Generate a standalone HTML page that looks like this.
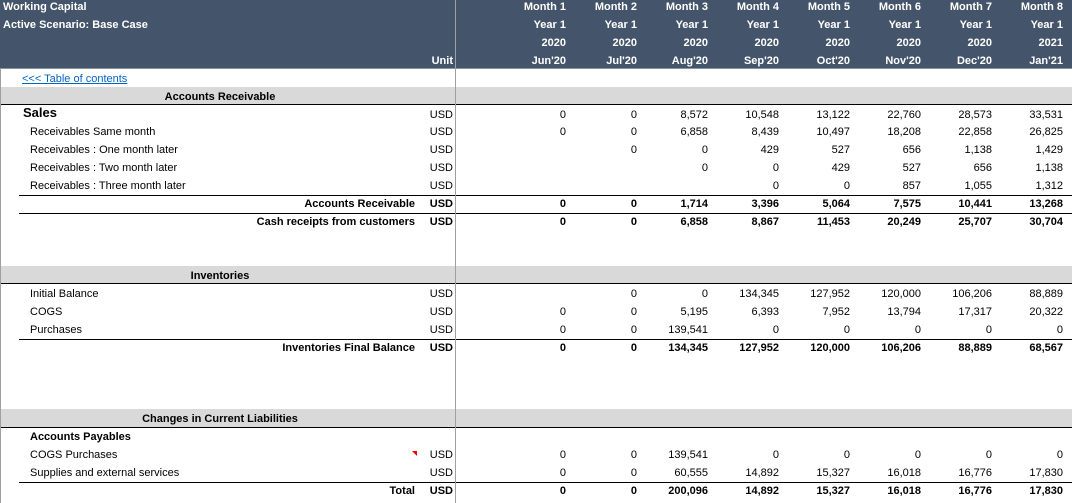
<!DOCTYPE html>
<html><head><meta charset="utf-8"><style>
body{margin:0;width:1072px;height:503px;overflow:hidden;background:#fff;font-family:"Liberation Sans",Arial,sans-serif;font-size:11px;color:#000;position:relative}
.hd{position:absolute;left:0;top:0;width:1072px;height:68px;background:#44546a;border-bottom:1px solid #8a929c}
.w{position:absolute;color:#fff;font-weight:bold;white-space:nowrap;line-height:18px}
.r{position:absolute;left:0;width:1072px;height:18px;line-height:18px;white-space:nowrap}
.r span{position:absolute;top:0}
.b{font-weight:bold}
.band{position:absolute;left:0;width:1072px;background:#d9d9d9;border-bottom:1.5px solid #000}
.ln{position:absolute;left:19px;width:1053px;height:1px;background:#000}
.vd{position:absolute;left:455px;top:0;width:1px;height:503px;background:#a0a0a0}
.u{right:619px}
.c1{right:506px}.c2{right:435px}.c3{right:364px}.c4{right:293px}.c5{right:222px}.c6{right:151px}.c7{right:80px}.c8{right:9px}
.lab{left:30px}.tot{right:657px;font-weight:bold}
.sec{left:0;width:440px;text-align:center;font-weight:bold}
</style></head><body>
<div class="hd"></div>
<div class="w" style="left:3px;top:-2px">Working Capital</div>
<div class="w" style="left:3px;top:16px">Active Scenario: Base Case</div>
<div class="w" style="right:619px;top:52px">Unit</div>
<div class="r" style="top:-2px;color:#fff;font-weight:bold"><span class="c1">Month 1</span><span class="c2">Month 2</span><span class="c3">Month 3</span><span class="c4">Month 4</span><span class="c5">Month 5</span><span class="c6">Month 6</span><span class="c7">Month 7</span><span class="c8">Month 8</span></div>
<div class="r" style="top:16px;color:#fff;font-weight:bold"><span class="c1">Year 1</span><span class="c2">Year 1</span><span class="c3">Year 1</span><span class="c4">Year 1</span><span class="c5">Year 1</span><span class="c6">Year 1</span><span class="c7">Year 1</span><span class="c8">Year 1</span></div>
<div class="r" style="top:34px;color:#fff;font-weight:bold"><span class="c1">2020</span><span class="c2">2020</span><span class="c3">2020</span><span class="c4">2020</span><span class="c5">2020</span><span class="c6">2020</span><span class="c7">2020</span><span class="c8">2021</span></div>
<div class="r" style="top:52px;color:#fff;font-weight:bold"><span class="c1">Jun'20</span><span class="c2">Jul'20</span><span class="c3">Aug'20</span><span class="c4">Sep'20</span><span class="c5">Oct'20</span><span class="c6">Nov'20</span><span class="c7">Dec'20</span><span class="c8">Jan'21</span></div>

<div class="band" style="top:87px;height:17px"></div>
<div class="band" style="top:266px;height:17px"></div>
<div class="band" style="top:409px;height:18px"></div>
<div class="ln" style="top:195px"></div>
<div class="ln" style="top:213px"></div>
<div class="ln" style="top:339px"></div>
<div class="ln" style="top:482px"></div>
<div class="vd"></div>
<div style="position:absolute;left:0;top:68px;width:1px;height:435px;background:#a0a0a0"></div>

<div class="r" style="top:70px"><span style="left:22px;color:#0563c1;text-decoration:underline">&lt;&lt;&lt; Table of contents</span></div>
<div class="r" style="top:88px"><span class="sec">Accounts Receivable</span></div>
<div class="r" style="top:104px"><span style="left:23px;font-weight:bold;font-size:13px">Sales</span><span class="u" style="top:2px">USD</span><span class="c1" style="top:2px">0</span><span class="c2" style="top:2px">0</span><span class="c3" style="top:2px">8,572</span><span class="c4" style="top:2px">10,548</span><span class="c5" style="top:2px">13,122</span><span class="c6" style="top:2px">22,760</span><span class="c7" style="top:2px">28,573</span><span class="c8" style="top:2px">33,531</span></div>
<div class="r" style="top:123px"><span class="lab">Receivables Same month</span><span class="u">USD</span><span class="c1">0</span><span class="c2">0</span><span class="c3">6,858</span><span class="c4">8,439</span><span class="c5">10,497</span><span class="c6">18,208</span><span class="c7">22,858</span><span class="c8">26,825</span></div>
<div class="r" style="top:141px"><span class="lab">Receivables : One month later</span><span class="u">USD</span><span class="c2">0</span><span class="c3">0</span><span class="c4">429</span><span class="c5">527</span><span class="c6">656</span><span class="c7">1,138</span><span class="c8">1,429</span></div>
<div class="r" style="top:159px"><span class="lab">Receivables : Two month later</span><span class="u">USD</span><span class="c3">0</span><span class="c4">0</span><span class="c5">429</span><span class="c6">527</span><span class="c7">656</span><span class="c8">1,138</span></div>
<div class="r" style="top:177px"><span class="lab">Receivables : Three month later</span><span class="u">USD</span><span class="c4">0</span><span class="c5">0</span><span class="c6">857</span><span class="c7">1,055</span><span class="c8">1,312</span></div>
<div class="r b" style="top:195px"><span class="tot">Accounts Receivable</span><span class="u">USD</span><span class="c1">0</span><span class="c2">0</span><span class="c3">1,714</span><span class="c4">3,396</span><span class="c5">5,064</span><span class="c6">7,575</span><span class="c7">10,441</span><span class="c8">13,268</span></div>
<div class="r b" style="top:213px"><span class="tot">Cash receipts from customers</span><span class="u">USD</span><span class="c1">0</span><span class="c2">0</span><span class="c3">6,858</span><span class="c4">8,867</span><span class="c5">11,453</span><span class="c6">20,249</span><span class="c7">25,707</span><span class="c8">30,704</span></div>

<div class="r" style="top:267px"><span class="sec">Inventories</span></div>
<div class="r" style="top:285px"><span class="lab">Initial Balance</span><span class="u">USD</span><span class="c2">0</span><span class="c3">0</span><span class="c4">134,345</span><span class="c5">127,952</span><span class="c6">120,000</span><span class="c7">106,206</span><span class="c8">88,889</span></div>
<div class="r" style="top:303px"><span class="lab">COGS</span><span class="u">USD</span><span class="c1">0</span><span class="c2">0</span><span class="c3">5,195</span><span class="c4">6,393</span><span class="c5">7,952</span><span class="c6">13,794</span><span class="c7">17,317</span><span class="c8">20,322</span></div>
<div class="r" style="top:321px"><span class="lab">Purchases</span><span class="u">USD</span><span class="c1">0</span><span class="c2">0</span><span class="c3">139,541</span><span class="c4">0</span><span class="c5">0</span><span class="c6">0</span><span class="c7">0</span><span class="c8">0</span></div>
<div class="r b" style="top:339px"><span class="tot">Inventories Final Balance</span><span class="u">USD</span><span class="c1">0</span><span class="c2">0</span><span class="c3">134,345</span><span class="c4">127,952</span><span class="c5">120,000</span><span class="c6">106,206</span><span class="c7">88,889</span><span class="c8">68,567</span></div>

<div class="r" style="top:410px"><span class="sec">Changes in Current Liabilities</span></div>
<div class="r" style="top:428px"><span class="lab b">Accounts Payables</span></div>
<div class="r" style="top:446px"><span class="lab">COGS Purchases</span><span class="u">USD</span><span class="c1">0</span><span class="c2">0</span><span class="c3">139,541</span><span class="c4">0</span><span class="c5">0</span><span class="c6">0</span><span class="c7">0</span><span class="c8">0</span></div>
<div class="r" style="top:464px"><span class="lab">Supplies and external services</span><span class="u">USD</span><span class="c1">0</span><span class="c2">0</span><span class="c3">60,555</span><span class="c4">14,892</span><span class="c5">15,327</span><span class="c6">16,018</span><span class="c7">16,776</span><span class="c8">17,830</span></div>
<div class="r b" style="top:482px"><span class="tot">Total</span><span class="u">USD</span><span class="c1">0</span><span class="c2">0</span><span class="c3">200,096</span><span class="c4">14,892</span><span class="c5">15,327</span><span class="c6">16,018</span><span class="c7">16,776</span><span class="c8">17,830</span></div>
<div style="position:absolute;left:412px;top:451px;width:0;height:0;border-left:5px solid transparent;border-top:5px solid #e00"></div>
</body></html>
